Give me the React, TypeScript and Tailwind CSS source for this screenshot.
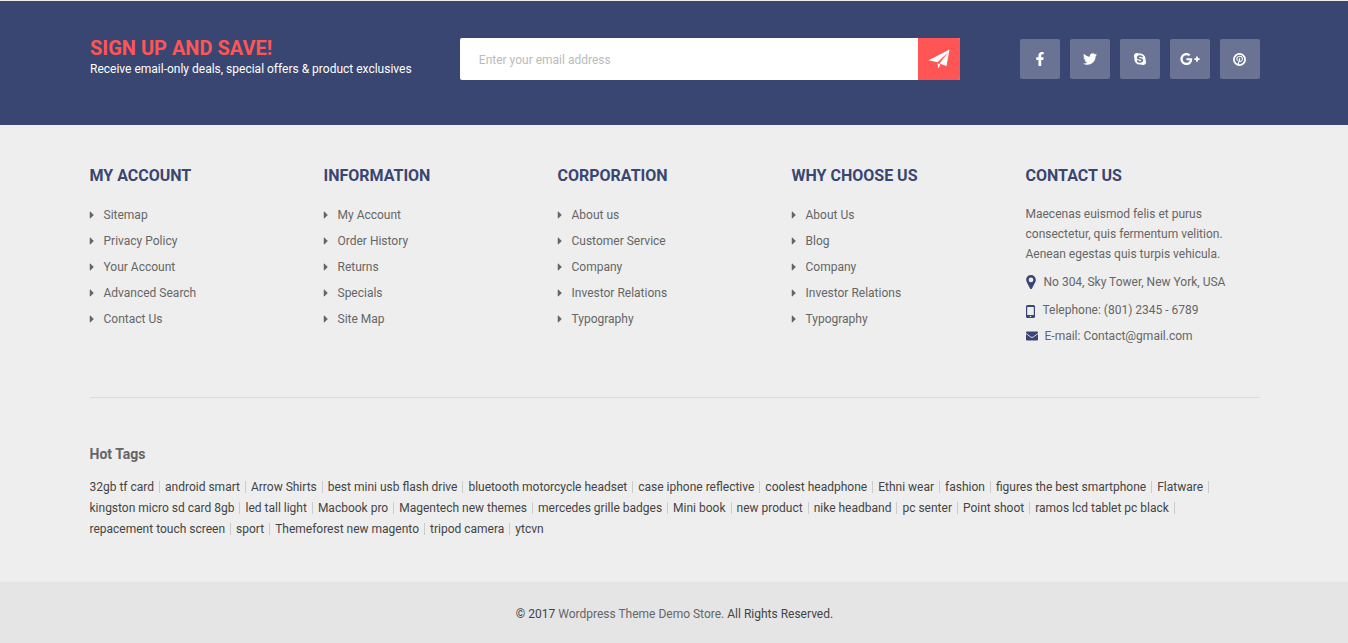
import React from "react";
import { FaFacebookF, FaTwitter, FaSkype, FaGooglePlusG, FaCaretRight } from "react-icons/fa";

const columns = [
  { title: "My Account", links: ["Sitemap", "Privacy Policy", "Your Account", "Advanced Search", "Contact Us"] },
  { title: "Information", links: ["My Account", "Order History", "Returns", "Specials", "Site Map"] },
  { title: "Corporation", links: ["About us", "Customer Service", "Company", "Investor Relations", "Typography"] },
  { title: "Why choose us", links: ["About Us", "Blog", "Company", "Investor Relations", "Typography"] },
];

const tags = [
  "32gb tf card", "android smart", "Arrow Shirts", "best mini usb flash drive",
  "bluetooth motorcycle headset", "case iphone reflective", "coolest headphone", "Ethni wear",
  "fashion", "figures the best smartphone", "Flatware", "kingston micro sd card 8gb",
  "led tall light", "Macbook pro", "Magentech new themes", "mercedes grille badges", "Mini book",
  "new product", "nike headband", "pc senter", "Point shoot", "ramos lcd tablet pc black",
  "repacement touch screen", "sport", "Themeforest new magento", "tripod camera", "ytcvn",
];

function PinterestIcon() {
  return (
    <svg viewBox="0 0 13 13" className="size-[13px]" fill="none" aria-hidden="true">
      <circle cx="6.5" cy="6.5" r="5.6" stroke="currentColor" strokeWidth="1.8" />
      <path d="M4.300 7.300C3 5.300 4.500 3.300 6.700 3.300c2.100 0 3.100 1.500 2.600 3.300-.5 1.900-2.300 2.300-3 1.300M6.700 5.300 5.200 11.500" stroke="currentColor" strokeWidth="1.100" strokeLinecap="round" />
    </svg>
  );
}

const socials = [
  { label: "Facebook", icon: <FaFacebookF className="size-3.5" /> },
  { label: "Twitter", icon: <FaTwitter className="size-3.5" /> },
  { label: "Skype", icon: <FaSkype className="size-3.5" /> },
  { label: "Google Plus", icon: <FaGooglePlusG className="size-5" /> },
  { label: "Pinterest", icon: <PinterestIcon /> },
];

function PlaneIcon() {
  return (
    <svg viewBox="0 0 22 20" className="h-5 w-[22px]" fill="currentColor" aria-hidden="true">
      <path d="M21.500.5 18.500 17 11.500 14.500 20 3.500 9.500 13.300 .5 11.200ZM9.600 14.300 12.400 15.800 10.300 19.500Z" />
    </svg>
  );
}

function PinIcon() {
  return (
    <svg viewBox="0 0 10 14" className="h-3.5 w-2.5" aria-hidden="true">
      <path fill="currentColor" fillRule="evenodd" d="M5 0a4.800 4.800 0 0 1 4.800 4.900c0 .8-.2 1.500-.5 2.100L6 13.500q-1 1-2 0L.7 7A4.800 4.800 0 0 1 5 0Zm0 2.600a2.300 2.300 0 1 0 0 4.600 2.300 2.300 0 0 0 0-4.600Z" />
    </svg>
  );
}

function PhoneIcon() {
  return (
    <svg viewBox="0 0 9 13" className="h-[13px] w-[9px]" aria-hidden="true">
      <path fill="currentColor" fillRule="evenodd" d="M1.500 0h6A1.500 1.500 0 0 1 9 1.500v10A1.500 1.500 0 0 1 7.500 13h-6A1.500 1.500 0 0 1 0 11.500v-10A1.500 1.500 0 0 1 1.500 0ZM1.200 2v8h6.600V2ZM4.500 10.800a.7.7 0 1 0 0 1.400.7.7 0 0 0 0-1.400Z" />
    </svg>
  );
}

function MailIcon() {
  return (
    <svg viewBox="0 0 12 10" className="h-2.5 w-3" aria-hidden="true">
      <rect width="12" height="9" y=".5" rx="1" fill="currentColor" />
      <path d="M0 2.500 4.700 6Q6 7 7.300 6L12 2.500" fill="none" stroke="#eeeeee" strokeWidth=".9" />
    </svg>
  );
}

function Heading({ children }: { children: React.ReactNode }) {
  return <h2 className="text-base leading-5 font-bold text-[#394671] uppercase">{children}</h2>;
}

export default function App() {
  return (
    <footer className="bg-[#eeeeee] font-[Roboto,sans-serif] text-xs text-[#666666]">
      <section className="border-t border-[#eeeeee] bg-[#394671] pt-[37px] pb-[45px] pl-0.5">
        <div className="mx-auto flex max-w-[1170px] items-start justify-between">
          <div>
            <h2 className="text-xl leading-[21px] font-bold text-[#ff5555] uppercase">Sign up and save!</h2>
            <p className="leading-5 text-white">Receive email-only deals, special offers &amp; product exclusives</p>
          </div>
          <form className="ml-12 flex h-[42px] max-w-[500px] flex-1 overflow-hidden rounded-xs bg-white" onSubmit={(e) => e.preventDefault()}>
            <input type="email" aria-label="Email address" placeholder="Enter your email address" className="min-w-0 flex-1 px-[19px] pt-0.5 outline-none placeholder:text-[#bbbbbb]" />
            <button type="submit" aria-label="Subscribe" className="flex w-[42px] items-center justify-center bg-[#ff5555] text-white">
              <PlaneIcon />
            </button>
          </form>
          <ul className="mt-px ml-15 flex gap-2.5">
            {socials.map((s) => (
              <li key={s.label}>
                <a href="#" aria-label={s.label} className="flex size-10 items-center justify-center rounded-xs bg-[#6b7395] text-white">{s.icon}</a>
              </li>
            ))}
          </ul>
        </div>
      </section>

      <div className="pl-px">
        <div className="mx-auto max-w-[1170px]">
          <div className="grid grid-cols-5 border-b border-[#dcdcdc] pt-[41px] pb-[49px]">
            {columns.map((col) => (
              <nav key={col.title} aria-label={col.title}>
                <Heading>{col.title}</Heading>
                <ul className="mt-4">
                  {col.links.map((link) => (
                    <li key={link}>
                      <a href="#" className="flex h-[26px] items-center">
                        <FaCaretRight className="mr-1.5 -ml-1 size-3" />
                        {link}
                      </a>
                    </li>
                  ))}
                </ul>
              </nav>
            ))}
            <address className="not-italic">
              <Heading>Contact us</Heading>
              <p className="mt-[18px] pr-8 leading-5">Maecenas euismod felis et purus consectetur, quis fermentum velition. Aenean egestas quis turpis vehicula.</p>
              <ul className="mt-1">
                <li className="flex h-7 items-center gap-2 whitespace-nowrap"><span className="text-[#394671]"><PinIcon /></span>No 304, Sky Tower, New York, USA</li>
                <li className="flex h-7 items-center gap-2"><span className="pt-0.5 text-[#394671]"><PhoneIcon /></span>Telephone: (801) 2345 - 6789</li>
                <li className="flex h-6 items-center gap-[7px]"><span className="text-[#394671]"><MailIcon /></span>E-mail: Contact@gmail.com</li>
              </ul>
            </address>
          </div>

          <section className="pt-[46px] pb-[43px]">
            <h2 className="text-sm leading-5 font-bold">Hot Tags</h2>
            <ul className="mt-3 flex flex-wrap gap-x-[5px] text-[#444444]">
              {tags.map((tag) => (
                <li key={tag} className="group flex h-[21px] items-center">
                  <a href="#" className="border-r border-[#cccccc] pr-[5px] leading-3 group-last:border-0">{tag}</a>
                </li>
              ))}
            </ul>
          </section>
        </div>
      </div>

      <div className="bg-[#e5e5e5] py-[22px] pl-px text-center leading-5 text-[#444444]">
        © 2017 <a href="#" className="text-[#666666]">Wordpress Theme Demo Store.</a> All Rights Reserved.
      </div>
    </footer>
  );
}
